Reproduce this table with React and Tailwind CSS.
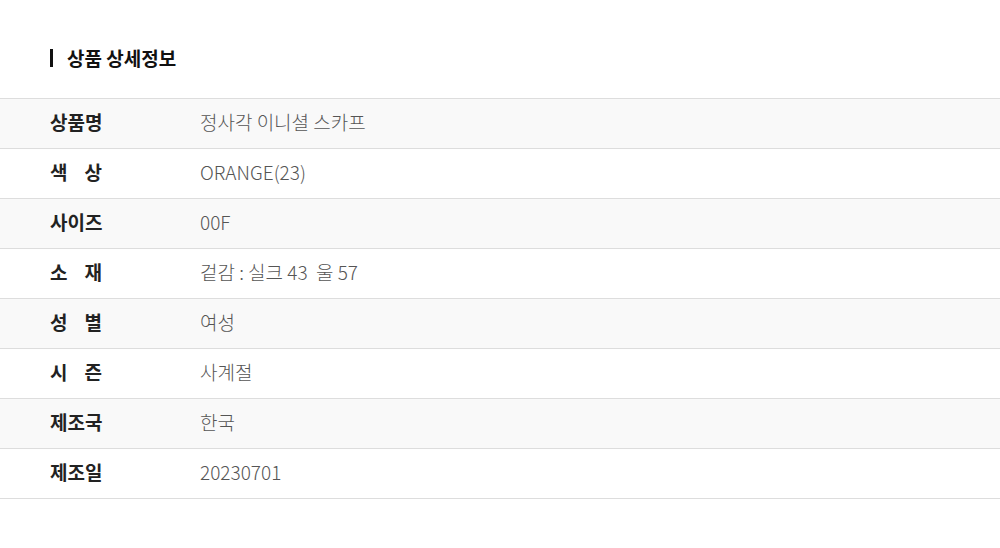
export default function App() {
  const rows = [
    ["상품명", "정사각 이니셜 스카프", false],
    ["색상", "ORANGE(23)", true],
    ["사이즈", "00F", false],
    ["소재", "겉감 : 실크 43  울 57", true],
    ["성별", "여성", true],
    ["시즌", "사계절", true],
    ["제조국", "한국", false],
    ["제조일", "20230701", false],
  ];
  return (
    <div className="w-[1000px] h-[548px] bg-white" style={{ fontFamily: '"Noto Sans CJK KR", "Noto Sans", sans-serif' }}>
      <div className="pt-[46px] pl-[50px] flex items-center h-[98px] pb-[28px] box-border">
        <div className="w-[3px] h-[18px] bg-[#111]" />
        <div className="ml-[14px] text-[19px] font-bold text-[#111]">상품 상세정보</div>
      </div>
      <div className="border-t border-[#dddddd]">
        {rows.map(([label, value, spaced], i) => (
          <div
            key={i}
            className={`flex items-center h-[50px] pb-[3px] border-b border-[#dddddd] ${i % 2 === 0 ? "bg-[#f9f9f9]" : "bg-white"}`}
          >
            <div className="pl-[50px] w-[200px] text-[19px] font-bold text-[#222]">
              {spaced ? (
                <div className="w-[52px] flex justify-between">
                  {label.split("").map((c, j) => (
                    <span key={j}>{c}</span>
                  ))}
                </div>
              ) : (
                <span>{label}</span>
              )}
            </div>
            <div className="text-[19px] font-light text-[#555] whitespace-pre">{value}</div>
          </div>
        ))}
      </div>
    </div>
  );
}
